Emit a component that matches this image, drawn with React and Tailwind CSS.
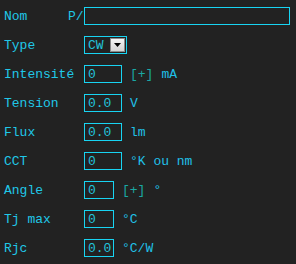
import React from 'react';

const rows = [
  { label: 'Intensité', value: '0', w: 'w-[38px]', unit: [['[+]', true], ['mA', false]] },
  { label: 'Tension', value: '0.0', w: 'w-[38px]', unit: [['V', false]] },
  { label: 'Flux', value: '0.0', w: 'w-[38px]', unit: [['lm', false]] },
  { label: 'CCT', value: '0', w: 'w-[38px]', unit: [['°K ou nm', false]] },
  { label: 'Angle', value: '0', w: 'w-[30px]', unit: [['[+]', true], ['°', false]] },
  { label: 'Tj max', value: '0', w: 'w-[30px]', unit: [['°C', false]] },
  { label: 'Rjc', value: '0.0', w: 'w-[30px]', unit: [['°C/W', false]] },
];

const Field = ({ value, w }) => (
  <div className={`${w} h-[18px] border border-[#18d4f2] pl-[3px] flex items-center text-[#22c4dc]`}>
    {value}
  </div>
);

export default function App() {
  return (
    <div
      className="w-[296px] h-[264px] bg-[#222222] text-[#20c8e8] text-[13px] leading-none pt-[7px] pl-[4px] flex flex-col gap-[11px]"
      style={{ fontFamily: '"Liberation Mono", monospace' }}
    >
      <div className="flex items-center h-[18px]">
        <span className="w-[64px]">Nom</span>
        <span className="w-[16px]">P/</span>
        <div className="w-[206px] h-[18px] border border-[#18d4f2]" />
      </div>
      <div className="flex items-center h-[18px]">
        <span className="w-[80px]">Type</span>
        <div className="w-[43px] h-[18px] border border-[#18d4f2] flex items-center justify-between pl-[3px] pr-[1px]">
          <span className="text-[#22c4dc]">CW</span>
          <div className="w-[15px] h-[14px] bg-gradient-to-b from-[#f4f4f4] to-[#d4d4d4] border border-[#8a8a8a] flex items-center justify-center">
            <svg width="7" height="4" viewBox="0 0 7 4">
              <path d="M0 0h7L3.5 4z" fill="#000" />
            </svg>
          </div>
        </div>
      </div>
      {rows.map(r => (
        <div key={r.label} className="flex items-center h-[18px]">
          <span className="w-[80px]">{r.label}</span>
          <Field value={r.value} w={r.w} />
          <div className="flex gap-[8px] ml-[8px]">
            {r.unit.map(([t, teal]) => (
              <span key={t} className={teal ? 'text-[#1aa8a4]' : 'text-[#20c0e8]'}>{t}</span>
            ))}
          </div>
        </div>
      ))}
    </div>
  );
}
